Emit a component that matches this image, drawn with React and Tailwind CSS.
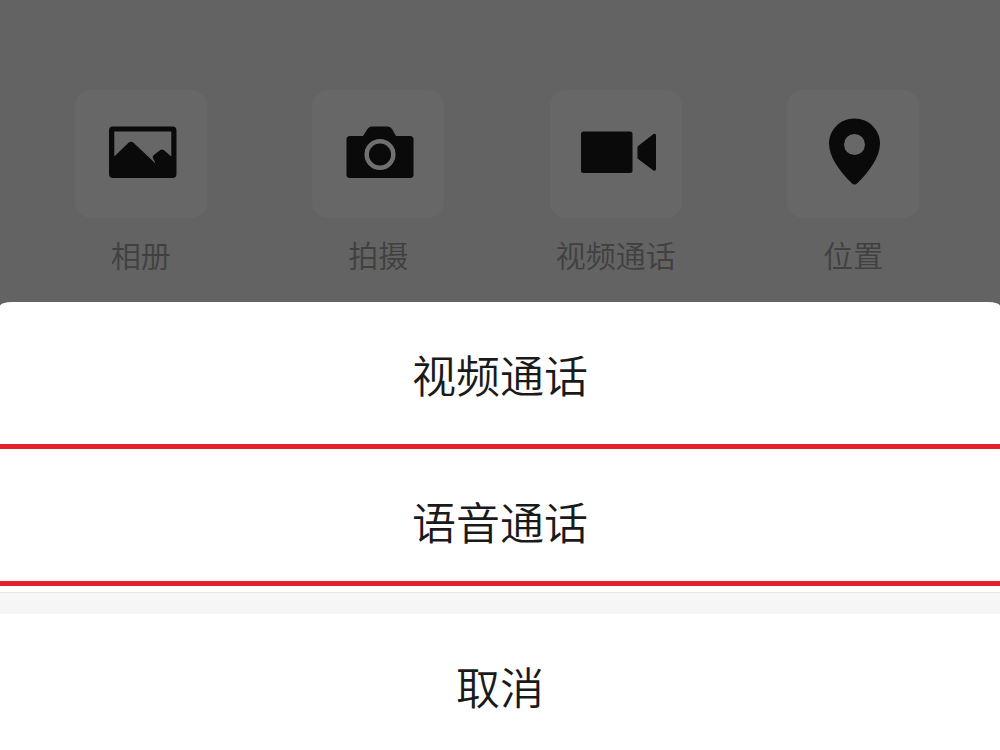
function AlbumIcon() {
  return (
    <svg viewBox="75 90 132 128" className="h-32 w-[132px]" fill="#0a0a0a" aria-hidden="true">
      <path
        fillRule="evenodd"
        d="M113 126.500H172.500Q176.500 126.500 176.500 130.500V174Q176.500 178 172.500 178H113Q109 178 109 174V130.500Q109 126.500 113 126.500ZM114.300 131.500V156.500L128.500 142.800Q131 140.800 133.500 142.800L155.500 163.500Q154.500 160.500 153 158.500Q152 156.500 153.800 155L160 150.300Q162 148.800 164 150.300L171.300 156.500V131.500Z"
      />
    </svg>
  );
}

function CameraIcon() {
  return (
    <svg viewBox="312 90 132 128" className="h-32 w-[132px]" aria-hidden="true">
      <path
        fill="#0a0a0a"
        d="M371.500 126.500H388Q390.500 126.500 392 129L396 136H410Q413.500 136 413.500 139.500V174.500Q413.500 178 410 178H350Q346.500 178 346.500 174.500V139.500Q346.500 136 350 136H363L367.500 129Q369 126.500 371.500 126.500Z"
      />
      <circle cx="380" cy="154.500" r="13.300" fill="none" stroke="#707070" strokeWidth="4.500" />
    </svg>
  );
}

function VideoIcon() {
  return (
    <svg viewBox="550 90 132 128" className="h-32 w-[132px]" fill="#0a0a0a" aria-hidden="true">
      <rect x="581" y="131.500" width="51.500" height="41.500" rx="2.500" />
      <path d="M637.500 146.500L653.500 134Q656 133 656 135.500V169Q656 171.500 653.500 170.500L637.500 158.500Z" />
    </svg>
  );
}

function PinIcon() {
  return (
    <svg viewBox="787 90 132 128" className="h-32 w-[132px]" aria-hidden="true">
      <path
        fill="#0a0a0a"
        d="M854.500 118.500C869 118.500 880 130 880 143.500C880 157 869.500 171 857.500 183Q854.500 186 851.500 183C839.500 171 829 157 829 143.500C829 130 840 118.500 854.500 118.500Z"
      />
      <circle cx="854.500" cy="144.500" r="10.500" fill="#686868" />
    </svg>
  );
}

const actions = [
  { label: "相册", Icon: AlbumIcon },
  { label: "拍摄", Icon: CameraIcon },
  { label: "视频通话", Icon: VideoIcon },
  { label: "位置", Icon: PinIcon },
];

export default function App() {
  return (
    <main className="flex min-h-screen flex-col bg-[#636363] font-['Noto_Sans_CJK_SC',sans-serif]">
      <section className="grid grid-cols-4 pt-[90px] pr-7 pb-7 pl-[22px]">
        {actions.map(({ label, Icon }) => (
          <button key={label} type="button" className="flex flex-col items-center gap-4">
            <span className="rounded-2xl bg-[#676767]">
              <Icon />
            </span>
            <span className="text-[30px] leading-10 font-[350] text-[#404040]">{label}</span>
          </button>
        ))}
      </section>

      <section
        role="dialog"
        aria-label="通话方式"
        className="flex flex-1 flex-col rounded-tl-[12px_4px] rounded-tr-[12px_4px] bg-white text-[44px] leading-[60px] font-[350] text-[#1a1a1a]"
      >
        <button type="button" className="pt-[42px] pb-10">
          视频通话
        </button>
        <button type="button" className="border-y-5 border-[#e5202b] pt-[42px] pb-[30px]">
          语音通话
        </button>
        <div className="mt-1.5 h-[22px] border-t border-[#e8e8e8] bg-[#f6f6f6]" />
        <button type="button" className="pt-[42px] pb-[34px]">
          取消
        </button>
      </section>
    </main>
  );
}
